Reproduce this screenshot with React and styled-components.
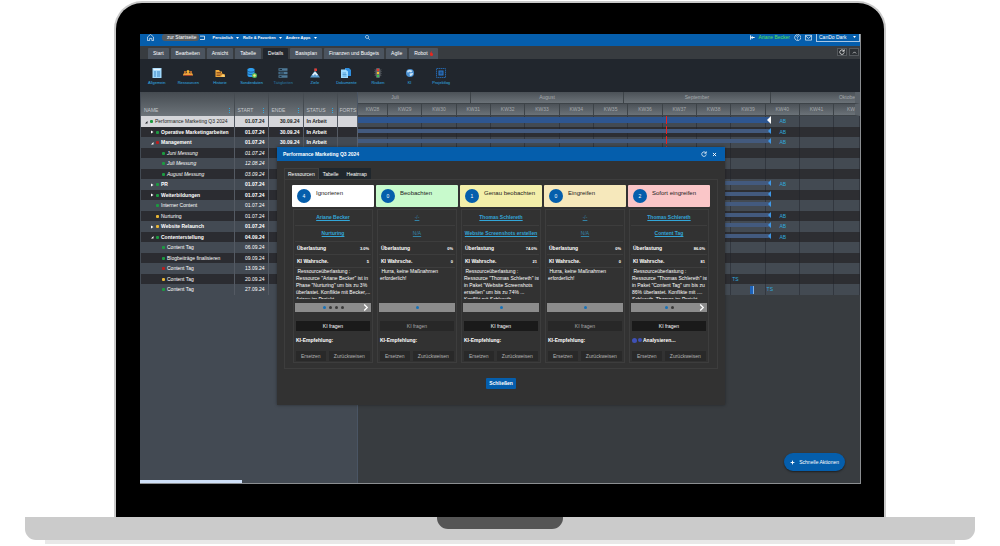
import styled, { createGlobalStyle } from 'styled-components';
import { useState } from 'react';

const GlobalStyle = createGlobalStyle`
  * {
    box-sizing: border-box;
  }

  body {
    margin: 0;
    background-color: #ffffff;
    font-family: "Liberation Sans", Arial, sans-serif;
    font-size: 5px;
    line-height: 7px;
    color: #ffffff;
  }

  button,
  select {
    margin: 0;
    padding: 0;
    border: none;
    background: none;
    color: inherit;
    font: inherit;
    cursor: pointer;
  }

  svg {
    display: block;
    flex: none;
  }
`;

/* ---------- laptop ---------- */

const Laptop = styled.div`
  padding-top: 1px;
`;

const Lid = styled.div`
  margin: 0 114px;
  padding: 31px 23px 33px 24px;
  border: 2px solid #c9c9c9;
  border-bottom: none;
  border-radius: 28px 28px 0 0;
  background-color: #000000;
`;

const Screen = styled.div`
  position: relative;
  overflow: hidden;
  border-right: 1px solid #8b8e91;
  border-bottom: 1px solid #8b8e91;
  background-color: #383c40;
`;

const Base = styled.div`
  margin: 0 25px;
  height: 23px;
  border-radius: 0 0 11px 11px;
  background-color: #cbcbcb;
`;

const Notch = styled.div`
  width: 126px;
  height: 12px;
  margin: 0 auto;
  border-radius: 0 0 11px 11px;
  background-color: #555555;
`;

const Foot = styled.div`
  margin: 0 45px;
  height: 4px;
  background-color: #e8e8e8;
`;

/* ---------- top bar ---------- */

const TopBar = styled.header`
  display: flex;
  align-items: flex-start;
  height: 12px;
  padding-left: 7px;
  background-color: #055eac;
`;

const TopGroup = styled.div`
  display: flex;
  align-items: center;
  gap: ${({ $gap }) => $gap}px;
  height: 7px;
  margin-left: ${({ $left }) => $left || 0}px;

  &.right {
    margin-left: auto;
  }
`;

const HomeHint = styled.a`
  padding: 0 3px 0 5px;
  border-radius: 3px;
  background-color: #555b60;
  color: #ffffff;
  text-decoration: none;
`;

const MenuButton = styled.button`
  display: flex;
  align-items: center;
  gap: 3px;
  font-size: 4px;
  font-weight: bold;
  white-space: nowrap;
`;

const UserName = styled.span`
  color: #58e05a;
`;

const ThemeBox = styled.label`
  display: flex;
  align-items: center;
  height: 8px;
  padding: 0 3px 0 2px;
  border: 1px solid #a9c7e4;
  border-top: none;

  & > select {
    width: 34px;
    height: 7px;
    appearance: none;
    line-height: 7px;
  }
`;

/* ---------- ribbon ---------- */

const TabBar = styled.nav`
  display: flex;
  align-items: flex-end;
  gap: 2px;
  height: 13px;
  padding: 0 1px 0 8px;
  background-color: #383c40;
`;

const RibbonTab = styled.button`
  display: flex;
  align-items: center;
  gap: 2px;
  height: 11px;
  padding: 0 5px;
  border-radius: 1px 1px 0 0;
  white-space: nowrap;
  color: #ffffff;
  background-color: ${({ $active }) => ($active ? '#21262d' : '#4b545f')};
`;

const TabTools = styled.div`
  display: flex;
  gap: 2px;
  margin-left: auto;
  padding-bottom: 3px;
`;

const SquareButton = styled.button`
  display: flex;
  align-items: center;
  justify-content: center;
  width: 10px;
  height: 8px;
  border: 1px solid #55595d;
  background-color: #2c3034;
`;

const Toolbar = styled.div`
  height: 33px;
  padding: 9px 0 0 1px;
  background-color: #21262d;
`;

const ToolGrid = styled.div`
  display: grid;
  grid-template-columns: repeat(10, 1fr);
  width: 316px;
`;

const ToolButton = styled.button`
  display: flex;
  flex-direction: column;
  align-items: center;
  gap: 1px;
  font-size: 4px;
  color: #32b0e6;
  opacity: ${({ $dim }) => ($dim ? 0.6 : 1)};
`;

/* ---------- plan table ---------- */

const Workspace = styled.main`
  display: flex;
  min-height: 391px;
`;

const TreePane = styled.section`
  flex: none;
  width: 218px;
  padding-left: 1px;
  border-right: 1px solid #4a5564;
  background-color: #434a53;
`;

const PlanTable = styled.table`
  width: 100%;
  table-layout: fixed;
  border-collapse: collapse;
`;

const HeadRow = styled.tr`
  height: 24px;
  background: linear-gradient(#454b51, #6d747a);
`;

const HeadCell = styled.th`
  width: ${({ $width }) => $width}px;
  padding: 13px 3px 0;
  border-right: 1px solid #454b51;
  overflow: hidden;
  white-space: nowrap;
  text-align: left;
  font-weight: normal;
  color: #c3c7cb;

  &:last-child {
    padding: 13px 0 0 2px;
    border-right: none;
  }
`;

const HeadLabel = styled.span`
  display: flex;
  align-items: center;
  justify-content: space-between;
`;

const PlanRow = styled.tr`
  height: ${({ $even }) => ($even ? 10 : 11)}px;
  background-color: ${({ $even }) => ($even ? '#2b2c31' : '#434a53')};
  font-weight: ${({ $bold }) => ($bold ? 'bold' : 'normal')};
  font-style: ${({ $italic }) => ($italic ? 'italic' : 'normal')};

  &.selected {
    background-color: #d5d6da;
    color: #1c1e22;
  }

  &.selected > td + td {
    font-weight: bold;
  }
`;

const PlanCell = styled.td`
  padding: 0 3px;
  border-right: 1px solid rgba(110, 116, 124, 0.4);
  overflow: hidden;
  white-space: nowrap;
  text-align: ${({ $align }) => $align || 'left'};
`;

const NameBox = styled.div`
  display: flex;
  align-items: center;
  gap: 2px;
  padding-left: ${({ $level }) => $level * 6}px;
`;

const Twisty = styled.span`
  width: 4px;
  height: 4px;
`;

const StateDot = styled.span`
  width: 3px;
  height: 3px;
  border-radius: 1px;
  background-color: ${({ $color }) => $color};
`;

/* ---------- gantt ---------- */

const GanttPane = styled.section`
  position: relative;
  flex: 1;
  min-width: 0;
`;

const MonthRow = styled.div`
  display: grid;
  grid-template-columns: 113fr 153fr 147fr 89fr;
  height: 12px;
`;

const WeekRow = styled.div`
  display: grid;
  grid-template-columns: 7fr repeat(13, 8fr) 6fr;
  height: 12px;
`;

const ScaleCell = styled.div`
  display: flex;
  align-items: center;
  justify-content: center;
  min-width: 0;
  overflow: hidden;
  border-right: 1px solid #3d4348;
  border-bottom: 1px solid #3d4348;
  background: linear-gradient(#4b5157, #6b7278);
  color: #a5a9ad;

  &.first {
    padding-right: 38px;
  }
  &.last {
    justify-content: flex-end;
    border-right: 5px solid #5a6168;
  }
`;

const GanttRow = styled.div`
  display: grid;
  grid-template-columns: 7fr repeat(13, 8fr) 6fr;
  height: ${({ $even }) => ($even ? 10 : 11)}px;
  background-color: ${({ $even }) => ($even ? '#2d2e32' : '#434a52')};
`;

const GanttCell = styled.div`
  grid-row: 1;
  grid-column: ${({ $col }) => $col};
  border-right: 1px solid rgba(30, 34, 40, 0.45);
`;

const Bar = styled.div`
  display: flex;
  grid-row: 1;
  grid-column: 1 / 13;
  justify-content: flex-end;
  align-items: center;
  height: ${({ $main }) => ($main ? 6 : 4)}px;
  margin: ${({ $main }) => ($main ? 1 : 2)}px -5px 0 0;
  background-color: ${({ $main }) => ($main ? '#2e5690' : '#435a7e')};
`;

const Resource = styled.span`
  grid-row: 1;
  grid-column: ${({ $col }) => $col};
  justify-self: ${({ $side }) => $side || 'center'};
  align-self: center;
  padding: 0 1px;
  color: #2fa9de;
`;

const SmallBar = styled.div`
  grid-row: 1;
  grid-column: 12;
  justify-self: center;
  align-self: center;
  width: 4px;
  height: 8px;
  margin-left: 8px;
  border-right: 1px solid #7fb2ea;
  background-color: #1e62b8;
`;

const TodayLine = styled.div`
  position: absolute;
  top: 24px;
  left: calc(61% + 2px);
  width: 1px;
  height: 180px;
  background: repeating-linear-gradient(#f0201c 0 8px, transparent 8px 10px);
`;

/* ---------- dialog ---------- */

const Dialog = styled.div`
  position: absolute;
  top: 113px;
  left: 137px;
  right: 135px;
  padding-bottom: 16px;
  background-color: #323232;
  box-shadow: 0 0 3px rgba(0, 0, 0, 0.4);
`;

const DialogTitle = styled.div`
  display: flex;
  align-items: center;
  gap: 5px;
  height: 14px;
  padding: 0 8px 0 6px;
  background-color: #055eac;

  & > h2 {
    flex: 1;
    margin: 0;
    font-size: 5px;
    font-weight: bold;
    color: #ffffff;
  }
`;

const DialogTabs = styled.div`
  display: flex;
  margin: 7px 7px 0;
`;

const DialogTab = styled.button`
  height: 11px;
  padding: 0 3px;
  color: #ffffff;
  border: 1px solid ${({ $active }) => ($active ? '#3f3f3f' : '#1f262c')};
  border-bottom: none;
  background-color: ${({ $active }) => ($active ? '#323232' : '#1f262c')};
`;

const Panel = styled.div`
  display: grid;
  grid-template-columns: repeat(5, minmax(0, 1fr));
  gap: 2px;
  margin: 0 7px;
  padding: 5px 7px;
  border: 1px solid #3d3d3d;
`;

const CardHead = styled.div`
  display: flex;
  gap: 5px;
  height: 22px;
  padding: 4px 5px;
  border-radius: 1px;
  background-color: ${({ $color }) => $color};
  color: #222222;

  & > h3 {
    margin: 0;
    font-size: 6px;
    line-height: 8px;
    font-weight: normal;
    white-space: nowrap;
  }
`;

const Count = styled.span`
  flex: none;
  width: 14px;
  height: 14px;
  border-radius: 50%;
  background-color: #055eac;
  color: #ffffff;
  line-height: 14px;
  text-align: center;
`;

const CardBody = styled.div`
  margin: 2px 1px 0;
  padding: 0 1px 1px;
  border: 1px solid #3d3d3d;
`;

const LinkRow = styled.div`
  height: 16px;
  border-bottom: 1px solid #3d3d3d;
  line-height: 15px;
  text-align: center;
  white-space: nowrap;

  & > a {
    color: #32a6d8;
    font-weight: ${({ $dim }) => ($dim ? 'normal' : 'bold')};
    opacity: ${({ $dim }) => ($dim ? 0.7 : 1)};
  }
`;

const ValueRow = styled.div`
  display: flex;
  justify-content: space-between;
  align-items: center;
  height: 13px;
  padding: 0 2px;
  border-bottom: 1px solid #3d3d3d;
  font-weight: bold;

  & > span {
    font-size: 4px;
  }
`;

const Message = styled.p`
  height: 31px;
  margin: 0;
  padding: 0 1px;
  overflow: hidden;
  white-space: pre;
`;

const Pager = styled.div`
  display: grid;
  grid-template-columns: 1fr auto 1fr;
  align-items: center;
  height: 9px;
  margin-top: 4px;
  background-color: #8c8c8c;

  & > button {
    grid-column: 3;
    justify-self: end;
    padding-right: 2px;
  }
`;

const PagerDots = styled.div`
  display: flex;
  grid-column: 2;
  gap: 3px;
`;

const PagerDot = styled.span`
  width: 3px;
  height: 3px;
  border-radius: 50%;
  background-color: ${({ $active }) => ($active ? '#1671b8' : '#3a3a3a')};
`;

const AskButton = styled.button`
  display: block;
  width: calc(100% - 2px);
  height: 10px;
  margin: 9px 1px 5px;
  background-color: ${({ disabled }) => (disabled ? '#282828' : '#1a1a1a')};
  color: ${({ disabled }) => (disabled ? '#a8a8a8' : '#ffffff')};
`;

const Advice = styled.div`
  display: flex;
  align-items: center;
  gap: 1px;
  height: 8px;
  padding-left: 1px;
  font-weight: bold;
`;

const Pulse = styled.span`
  width: ${({ $size }) => $size}px;
  height: ${({ $size }) => $size}px;
  border-radius: 50%;
  background-color: #3f51b5;
`;

const CardActions = styled.div`
  display: grid;
  grid-template-columns: 30fr 42fr;
  gap: 3px;
  margin-top: 7px;
  padding: 0 1px;

  & > button {
    height: 10px;
    background-color: #292929;
    color: #b4b4b4;
  }
`;

const CloseButton = styled.button`
  display: block;
  height: 11px;
  margin: 9px auto 0;
  padding: 0 3px;
  border-radius: 1px;
  background-color: #055eac;
  color: #ffffff;
  font-weight: bold;
`;

/* ---------- floating parts ---------- */

const QuickActions = styled.button`
  position: absolute;
  right: 15px;
  bottom: 12px;
  display: flex;
  align-items: center;
  gap: 4px;
  height: 18px;
  padding: 0 6px;
  border-radius: 9px;
  background-color: #055eac;
  box-shadow: 0 1px 2px rgba(0, 0, 0, 0.5);
  color: #ffffff;
`;

const StatusHint = styled.div`
  position: absolute;
  left: 0;
  bottom: 0;
  width: 102px;
  height: 3px;
  background-color: #cfe0f8;
`;

const GREEN = '#1c9a40';
const RED = '#b81e1e';
const YELLOW = '#e8b636';

const menus = ['Persönlich', 'Rolle & Favoriten', 'Andere Apps'];

const tabs = [
  'Start',
  'Bearbeiten',
  'Ansicht',
  'Tabelle',
  'Details',
  'Basisplan',
  'Finanzen und Budgets',
  'Agile',
  'Robot',
];

const tools = [
  'Allgemein',
  'Ressourcen',
  'Historie',
  'Sonderdaten',
  'Tätigkeiten',
  'Ziele',
  'Dokumente',
  'Risiken',
  'KI',
  'Projektlog',
];

const columns = [
  { label: 'NAME', width: 93, menu: true },
  { label: 'START', width: 34, menu: true },
  { label: 'ENDE', width: 35, menu: true },
  { label: 'STATUS', width: 34, menu: true },
  { label: 'FORTS', width: 20 },
];

const rows = [
  { name: 'Performance Marketing Q3 2024', level: 0, arrow: 'open', dot: GREEN, start: '01.07.24', end: '30.09.24', status: 'In Arbeit', bar: true, res: 'AB' },
  { name: 'Operative Marketingarbeiten', level: 1, arrow: 'closed', dot: GREEN, start: '01.07.24', end: '30.09.24', status: 'In Arbeit', bold: true, bar: true, res: 'AB' },
  { name: 'Management', level: 1, arrow: 'open', dot: RED, start: '01.07.24', end: '30.09.24', status: 'In Arbeit', bold: true, bar: true, res: 'AB' },
  { name: 'Juni Messung', level: 2, dot: GREEN, start: '01.07.24', italic: true },
  { name: 'Juli Messung', level: 2, dot: GREEN, start: '12.08.24', italic: true },
  { name: 'August Messung', level: 2, dot: GREEN, start: '03.09.24', italic: true },
  { name: 'PR', level: 1, arrow: 'closed', dot: GREEN, start: '01.07.24', bold: true, bar: true, res: 'AB' },
  { name: 'Weiterbildungen', level: 1, arrow: 'closed', dot: GREEN, start: '01.07.24', bold: true, bar: true },
  { name: 'Interner Content', level: 1, dot: GREEN, start: '01.07.24', bar: true },
  { name: 'Nurturing', level: 1, dot: YELLOW, start: '01.07.24', bar: true, res: 'AB' },
  { name: 'Website Relaunch', level: 1, arrow: 'closed', dot: YELLOW, start: '01.07.24', bold: true, bar: true, res: 'AB' },
  { name: 'Contenterstellung', level: 1, arrow: 'open', dot: GREEN, start: '04.09.24', bold: true, bar: true, res: 'AB' },
  { name: 'Content Tag', level: 2, dot: GREEN, start: '06.09.24' },
  { name: 'Blogbeiträge finalisieren', level: 2, dot: GREEN, start: '09.09.24' },
  { name: 'Content Tag', level: 2, dot: RED, start: '13.09.24' },
  { name: 'Content Tag', level: 2, dot: YELLOW, start: '20.09.24', res: 'TS', resCol: 12, resSide: 'start' },
  { name: 'Content Tag', level: 2, dot: GREEN, start: '27.09.24', small: true, res: 'TS', resCol: 13, resSide: 'start' },
];

const months = ['Juli', 'August', 'September', 'Oktobe'];
const weeks = Array.from({ length: 15 }, (_, i) => 28 + i);

const cards = [
  {
    title: 'Ignorieren',
    color: '#ffffff',
    count: 4,
    person: 'Ariane Becker',
    item: 'Nurturing',
    load: '3.0%',
    ki: '5',
    text: ' Ressourceüberlastung :\nRessource "Ariane Becker" ist in\nPhase "Nurturing" um bis zu 3%\nüberlastet. Konflikte mit Becker,...\nAriane im Projekt',
    pages: 4,
  },
  {
    title: 'Beobachten',
    color: '#c8facc',
    count: 0,
    person: '-/-',
    item: 'N/A',
    load: '0%',
    ki: '0',
    text: ' Hurra, keine Maßnahmen\nerforderlich!',
    pages: 1,
  },
  {
    title: 'Genau beobachten',
    color: '#f3efaa',
    count: 1,
    person: 'Thomas Schlereth',
    item: 'Website Screenshots erstellen',
    load: '74.0%',
    ki: '21',
    text: ' Ressourceüberlastung :\nRessource "Thomas Schlereth" ist\nin Paket "Website Screenshots\nerstellen" um bis zu 74% ...\nKonflikt mit Schlereth',
    pages: 1,
  },
  {
    title: 'Eingreifen',
    color: '#f6e8bb',
    count: 0,
    person: '-/-',
    item: 'N/A',
    load: '0%',
    ki: '0',
    text: ' Hurra, keine Maßnahmen\nerforderlich!',
    pages: 1,
  },
  {
    title: 'Sofort eingreifen',
    color: '#fac6c8',
    count: 2,
    person: 'Thomas Schlereth',
    item: 'Content Tag',
    load: '86.0%',
    ki: '81',
    text: ' Ressourceüberlastung :\nRessource "Thomas Schlereth" ist\nin Paket "Content Tag" um bis zu\n86% überlastet. Konflikte mit ....\nSchlereth, Thomas im Projekt',
    pages: 2,
    running: true,
  },
];

function ToolIcon({ name }) {
  const drawings = {
    Allgemein: (
      <>
        <rect x="1" width="18" height="20" fill="#9fd8fc" />
        <path d="M3 3h14" stroke="#e8f6ff" strokeWidth="3" />
        <path d="M4 8h4M10 8h6M4 12h4M10 12h6M4 16h4M10 16h6" stroke="#3f86c2" strokeWidth="2" />
      </>
    ),
    Ressourcen: (
      <>
        <circle cx="10" cy="7" r="3" fill="#f7b733" />
        <circle cx="4" cy="8" r="2" fill="#e8832e" />
        <circle cx="16" cy="8" r="2" fill="#e8832e" />
        <path d="M0 15c0-6 5-6 6-4 1-3 7-3 8 0 1-2 6-2 6 4z" fill="#f0a23a" />
        <path d="M2 15h16" stroke="#a0402e" strokeWidth="2" />
      </>
    ),
    Historie: (
      <>
        <path d="M1 4h7l2 3h4v4l6 2v5H1z" fill="#f0a93c" />
        <path d="M3 9h9M3 12h11M3 15h8" stroke="#7c3f1a" strokeWidth="1.5" />
        <path d="M12 17l4-4 3 2v3z" fill="#f8d67e" />
      </>
    ),
    Sonderdaten: (
      <>
        <path d="M1 3c0-4 14-4 14 0v12c0 4-14 4-14 0z" fill="#2f9ff0" />
        <path d="M1 6c2 3 12 3 14 0M1 11c2 3 12 3 14 0" fill="none" stroke="#134e86" strokeWidth="1.5" />
        <circle cx="15" cy="15" r="5" fill="#4fb860" />
        <circle cx="15" cy="15" r="2.5" fill="#fbe97a" />
      </>
    ),
    Tätigkeiten: (
      <>
        <path d="M1 3h18M1 10h18M1 17h18" stroke="#6fb2e0" strokeWidth="5" />
        <path d="M3 3h5M3 10h9M3 17h4" stroke="#17344f" strokeWidth="2" />
      </>
    ),
    Ziele: (
      <>
        <path d="M0 19 7 9l3-2 3 2 7 10z" fill="#5a9ccf" />
        <path d="m4 14 6-7 6 7-3 1-3-3-3 3z" fill="#e8f3fb" />
        <path d="M10 8V1" stroke="#dddddd" />
        <path d="M9 1h5v5H9z" fill="#e53935" />
      </>
    ),
    Dokumente: (
      <>
        <path d="M8 0h8l4 4v12H8z" fill="#2f8fe0" />
        <path d="M0 3h9l5 4v13H0z" fill="#9fdcff" />
        <path d="M3 10h7M3 13h8M3 16h8" stroke="#3f8fcb" strokeWidth="1.5" />
      </>
    ),
    Risiken: (
      <>
        <path d="M2 3h16l-3 3h3l-3 4h3l-3 4h3l-4 3H6l-4-3h3l-3-4h3L2 6h3z" fill="#4b5056" />
        <rect x="6" width="8" height="20" rx="2" fill="#5f656a" />
        <circle cx="10" cy="4" r="2.4" fill="#f0332e" />
        <circle cx="10" cy="10" r="2.4" fill="#f2c52f" />
        <circle cx="10" cy="16" r="2.4" fill="#38c356" />
      </>
    ),
    KI: (
      <>
        <circle cx="10" cy="10" r="8" fill="#4a8fd0" />
        <path d="M4 6c3-3 8-3 11 0l-3 3-4-2-2 3zM9 11l7-1c0 4-3 6-6 6z" fill="#cfe8f8" />
      </>
    ),
    Projektlog: (
      <>
        <rect x="1" y="1" width="18" height="18" fill="none" stroke="#2562a4" strokeWidth="2" strokeDasharray="3 1" />
        <rect x="6" y="6" width="8" height="8" fill="#1c4f8a" stroke="#2f78c8" strokeWidth="2" />
      </>
    ),
  };
  return (
    <svg width="10" height="10" viewBox="0 0 20 20" aria-hidden="true">
      {drawings[name]}
    </svg>
  );
}

function Caret() {
  return (
    <svg width="3" height="2" viewBox="0 0 6 4" aria-hidden="true">
      <path d="M0 0h6L3 4z" fill="#ffffff" />
    </svg>
  );
}

function LineIcon({ size, d, color = '#ffffff', width = 1.5 }) {
  return (
    <svg width={size} height={size} viewBox="0 0 16 16" aria-hidden="true">
      <path d={d} fill="none" stroke={color} strokeWidth={width} />
    </svg>
  );
}

const RELOAD = 'M13 5a6 6 0 1 0 1 4M14 1v5H9';

function Header() {
  return (
    <TopBar>
      <TopGroup $gap={8}>
        <LineIcon size={7} d="M1 15V7l7-6 7 6v8h-4v-5H6v5z" />
      </TopGroup>
      <TopGroup $gap={1} $left={8}>
        <HomeHint href="#start">zur Startseite</HomeHint>
        <LineIcon size={6} d="M0 3h12v9H0" width={2} />
      </TopGroup>
      <TopGroup $gap={4} $left={6}>
        {menus.map((menu) => (
          <MenuButton key={menu}>
            {menu}
            <Caret />
          </MenuButton>
        ))}
      </TopGroup>
      <TopGroup $gap={0} $left={48}>
        <LineIcon size={5} d="M6 1a5 5 0 1 0 1 0M10 10l5 5" width={2} />
      </TopGroup>
      <TopGroup className="right" $gap={4}>
        <LineIcon size={5} d="M2 1v14M4 8h11M8 4 4 8l4 4" width={3} />
        <UserName>Ariane Becker</UserName>
        <LineIcon size={7} d="M8 1a7 7 0 1 0 1 0M6 6c0-3 5-3 4 0L8 8v2M8 11v2" />
        <LineIcon size={7} d="M1 3h14v11H1zM1 4l7 6 7-6" />
        <ThemeBox>
          <select aria-label="Design" defaultValue="CanDo Dark">
            <option>CanDo Dark</option>
          </select>
          <Caret />
        </ThemeBox>
      </TopGroup>
    </TopBar>
  );
}

function PlanTree() {
  return (
    <TreePane>
      <PlanTable>
        <thead>
          <HeadRow>
            {columns.map((col) => (
              <HeadCell key={col.label} $width={col.width}>
                <HeadLabel>
                  {col.label}
                  {col.menu && (
                    <svg width="2" height="6" viewBox="0 0 2 6" aria-hidden="true">
                      <path d="M0 0h1v1H0zM0 2h1v1H0zM0 4h1v1H0z" fill="#2fa9de" />
                    </svg>
                  )}
                </HeadLabel>
              </HeadCell>
            ))}
          </HeadRow>
        </thead>
        <tbody>
          {rows.map((row, idx) => (
            <PlanRow
              key={idx}
              className={idx === 0 ? 'selected' : ''}
              $even={idx % 2 === 1}
              $bold={row.bold}
              $italic={row.italic}
            >
              <PlanCell>
                <NameBox $level={row.level}>
                  <Twisty>
                    {row.arrow && (
                      <svg width="4" height="4" viewBox="0 0 8 8" aria-hidden="true">
                        <path
                          d={row.arrow === 'open' ? 'M7 2v5H2z' : 'M2 1l5 3-5 3z'}
                          fill={idx === 0 ? '#1c1e22' : '#ffffff'}
                        />
                      </svg>
                    )}
                  </Twisty>
                  <StateDot $color={row.dot} />
                  {row.name}
                </NameBox>
              </PlanCell>
              <PlanCell $align="right">{row.start}</PlanCell>
              <PlanCell $align="right">{row.end}</PlanCell>
              <PlanCell>{row.status}</PlanCell>
              <PlanCell />
            </PlanRow>
          ))}
        </tbody>
      </PlanTable>
    </TreePane>
  );
}

function Gantt() {
  return (
    <GanttPane>
      <MonthRow>
        {months.map((month, idx) => (
          <ScaleCell
            key={month}
            className={idx === 0 ? 'first' : idx === 3 ? 'last' : ''}
          >
            {month}
          </ScaleCell>
        ))}
      </MonthRow>
      <WeekRow>
        {weeks.map((week) => (
          <ScaleCell key={week} className={week === 42 ? 'last' : ''}>
            {week === 42 ? 'KW' : `KW${week}`}
          </ScaleCell>
        ))}
      </WeekRow>
      {rows.map((row, idx) => (
        <GanttRow key={idx} $even={idx % 2 === 1}>
          {weeks.map((week, col) => (
            <GanttCell key={week} $col={col + 1} />
          ))}
          {row.bar && (
            <Bar $main={idx === 0}>
              <svg
                width={idx === 0 ? 4 : 3}
                height={idx === 0 ? 8 : 6}
                viewBox="0 0 3 6"
                aria-hidden="true"
              >
                <path d="M3 0v6L0 3z" fill={idx === 0 ? '#ffffff' : '#3f97e6'} />
              </svg>
            </Bar>
          )}
          {row.small && <SmallBar />}
          {row.res && (
            <Resource $col={row.resCol || 13} $side={row.resSide}>
              {row.res}
            </Resource>
          )}
        </GanttRow>
      ))}
      <TodayLine />
    </GanttPane>
  );
}

function Card({ card }) {
  const idle = card.count === 0;

  return (
    <article>
      <CardHead $color={card.color}>
        <Count>{card.count}</Count>
        <h3>{card.title}</h3>
      </CardHead>
      <CardBody>
        <LinkRow $dim={idle}>
          <a href="#person">{card.person}</a>
        </LinkRow>
        <LinkRow $dim={idle}>
          <a href="#paket">{card.item}</a>
        </LinkRow>
        <ValueRow>
          Überlastung <span>{card.load}</span>
        </ValueRow>
        <ValueRow>
          KI Wahrsche. <span>{card.ki}</span>
        </ValueRow>
        <Message>{card.text}</Message>
        <Pager>
          <PagerDots>
            {Array.from({ length: card.pages }, (_, i) => (
              <PagerDot key={i} $active={i === 0} />
            ))}
          </PagerDots>
          {card.pages > 1 && (
            <button aria-label="Weiter">
              <LineIcon size={7} d="M5 1l7 7-7 7" width={3} />
            </button>
          )}
        </Pager>
        <AskButton disabled={idle}>KI fragen</AskButton>
        <Advice>
          {card.running ? (
            <>
              <Pulse $size={5} />
              <Pulse $size={4} />
              Analysieren...
            </>
          ) : (
            'KI-Empfehlung:'
          )}
        </Advice>
        <CardActions>
          <button>Ersetzen</button>
          <button>Zurückweisen</button>
        </CardActions>
      </CardBody>
    </article>
  );
}

function ResourceDialog({ close }) {
  const [tab, setTab] = useState('Ressourcen');

  return (
    <Dialog role="dialog" aria-label="Performance Marketing Q3 2024">
      <DialogTitle>
        <h2>Performance Marketing Q3 2024</h2>
        <button aria-label="Neu laden">
          <LineIcon size={6} d={RELOAD} width={2} />
        </button>
        <button aria-label="Fenster schließen" onClick={close}>
          <LineIcon size={5} d="M3 3l10 10M13 3 3 13" width={3} />
        </button>
      </DialogTitle>
      <DialogTabs>
        {['Ressourcen', 'Tabelle', 'Heatmap'].map((name) => (
          <DialogTab
            key={name}
            $active={tab === name}
            onClick={() => setTab(name)}
          >
            {name}
          </DialogTab>
        ))}
      </DialogTabs>
      <Panel>
        {cards.map((card) => (
          <Card key={card.title} card={card} />
        ))}
      </Panel>
      <CloseButton onClick={close}>Schließen</CloseButton>
    </Dialog>
  );
}

export default function App() {
  const [activeTab, setActiveTab] = useState('Details');
  const [dialogOpen, setDialogOpen] = useState(true);

  return (
    <Laptop>
      <GlobalStyle />
      <Lid>
        <Screen>
          <Header />
          <TabBar>
            {tabs.map((tab) => (
              <RibbonTab
                key={tab}
                $active={tab === activeTab}
                onClick={() => setActiveTab(tab)}
              >
                {tab}
                {tab === 'Robot' && (
                  <svg width="3" height="5" viewBox="0 0 6 10" aria-hidden="true">
                    <path d="M4 0C0 3 0 5 0 7a3 3 0 0 0 6 0c0-2-1-3-3-3z" fill="#e8271f" />
                  </svg>
                )}
              </RibbonTab>
            ))}
            <TabTools>
              <SquareButton aria-label="Aktualisieren">
                <LineIcon size={6} d={RELOAD} width={2} />
              </SquareButton>
              <SquareButton aria-label="Einklappen">
                <LineIcon size={5} d="M3 11l5-5 5 5" width={2} />
              </SquareButton>
            </TabTools>
          </TabBar>
          <Toolbar>
            <ToolGrid>
              {tools.map((tool) => (
                <ToolButton key={tool} $dim={tool === 'Tätigkeiten'}>
                  <ToolIcon name={tool} />
                  {tool}
                </ToolButton>
              ))}
            </ToolGrid>
          </Toolbar>
          <Workspace>
            <PlanTree />
            <Gantt />
          </Workspace>
          {dialogOpen && <ResourceDialog close={() => setDialogOpen(false)} />}
          <QuickActions>
            <LineIcon size={5} d="M8 2v12M2 8h12" width={3} />
            Schnelle Aktionen
          </QuickActions>
          <StatusHint />
        </Screen>
      </Lid>
      <Base>
        <Notch />
      </Base>
      <Foot />
    </Laptop>
  );
}
